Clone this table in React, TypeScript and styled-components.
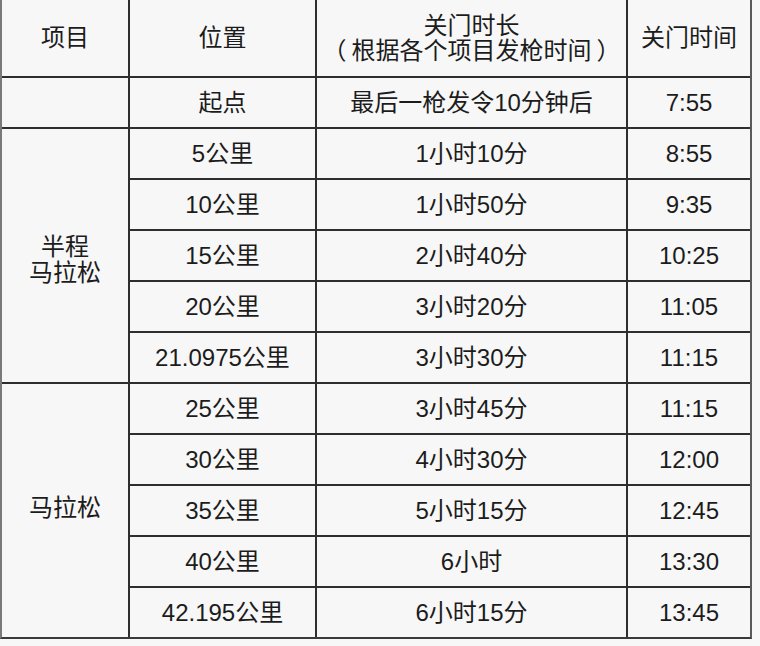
import React from "react";
import styled, { createGlobalStyle } from "styled-components";

const Global = createGlobalStyle`
  html, body {
    margin: 0;
    padding: 0;
    background: #f7f7f7;
  }
  body {
    font-family: "Liberation Sans", "Noto Sans CJK SC", sans-serif;
    color: #1c1c1c;
  }
`;

const Grid = styled.div`
  display: grid;
  width: 748px;
  grid-template-columns: 126px 185px 309px 122px;
  grid-template-rows: 76px repeat(11, 49px);
  gap: 2px;
  background: #2e2e2e;
  border-left: 2px solid #7a7a7a;
  border-right: 2px solid #5a5a5a;
  border-bottom: 2px solid #3a3a3a;
`;

const Cell = styled.div`
  background: #f7f7f7;
  display: flex;
  align-items: center;
  justify-content: center;
  text-align: center;
  font-size: 24px;
  line-height: 26px;
  box-sizing: border-box;
`;

const GroupCell = styled(Cell)<{ $top?: number; $bottom?: number }>`
  grid-row: span 5;
  padding: ${(p) => p.$top ?? 0}px 0 ${(p) => p.$bottom ?? 0}px;
`;

const Lines = styled.div<{ $lh: number }>`
  line-height: ${(p) => p.$lh}px;
  white-space: nowrap;
`;

const Paren = styled.span<{ $open?: boolean }>`
  display: inline-block;
  margin: ${(p) => (p.$open ? "0 5px 0 0" : "0 0 0 5px")};
`;

const half = [
  ["5公里", "1小时10分", "8:55"],
  ["10公里", "1小时50分", "9:35"],
  ["15公里", "2小时40分", "10:25"],
  ["20公里", "3小时20分", "11:05"],
  ["21.0975公里", "3小时30分", "11:15"],
];
const full = [
  ["25公里", "3小时45分", "11:15"],
  ["30公里", "4小时30分", "12:00"],
  ["35公里", "5小时15分", "12:45"],
  ["40公里", "6小时", "13:30"],
  ["42.195公里", "6小时15分", "13:45"],
];

const Rows = ({ rows, id }: { rows: string[][]; id: string }) => (
  <>
    {rows.map((r, i) => (
      <React.Fragment key={id + i}>
        <Cell>{r[0]}</Cell>
        <Cell>{r[1]}</Cell>
        <Cell>{r[2]}</Cell>
      </React.Fragment>
    ))}
  </>
);

export default function App() {
  return (
    <>
      <Global />
      <Grid>
        <Cell>项目</Cell>
        <Cell>位置</Cell>
        <Cell>
          <Lines $lh={25}>
            关门时长
            <br />
            <Paren $open>（</Paren>根据各个项目发枪时间<Paren>）</Paren>
          </Lines>
        </Cell>
        <Cell>关门时间</Cell>

        <Cell />
        <Cell>起点</Cell>
        <Cell>最后一枪发令10分钟后</Cell>
        <Cell>7:55</Cell>

        <GroupCell $top={8}>
          <Lines $lh={26}>
            半程
            <br />
            马拉松
          </Lines>
        </GroupCell>
        <Rows rows={half} id="h" />

        <GroupCell $bottom={6}>
          <Lines $lh={26}>马拉松</Lines>
        </GroupCell>
        <Rows rows={full} id="f" />
      </Grid>
    </>
  );
}
